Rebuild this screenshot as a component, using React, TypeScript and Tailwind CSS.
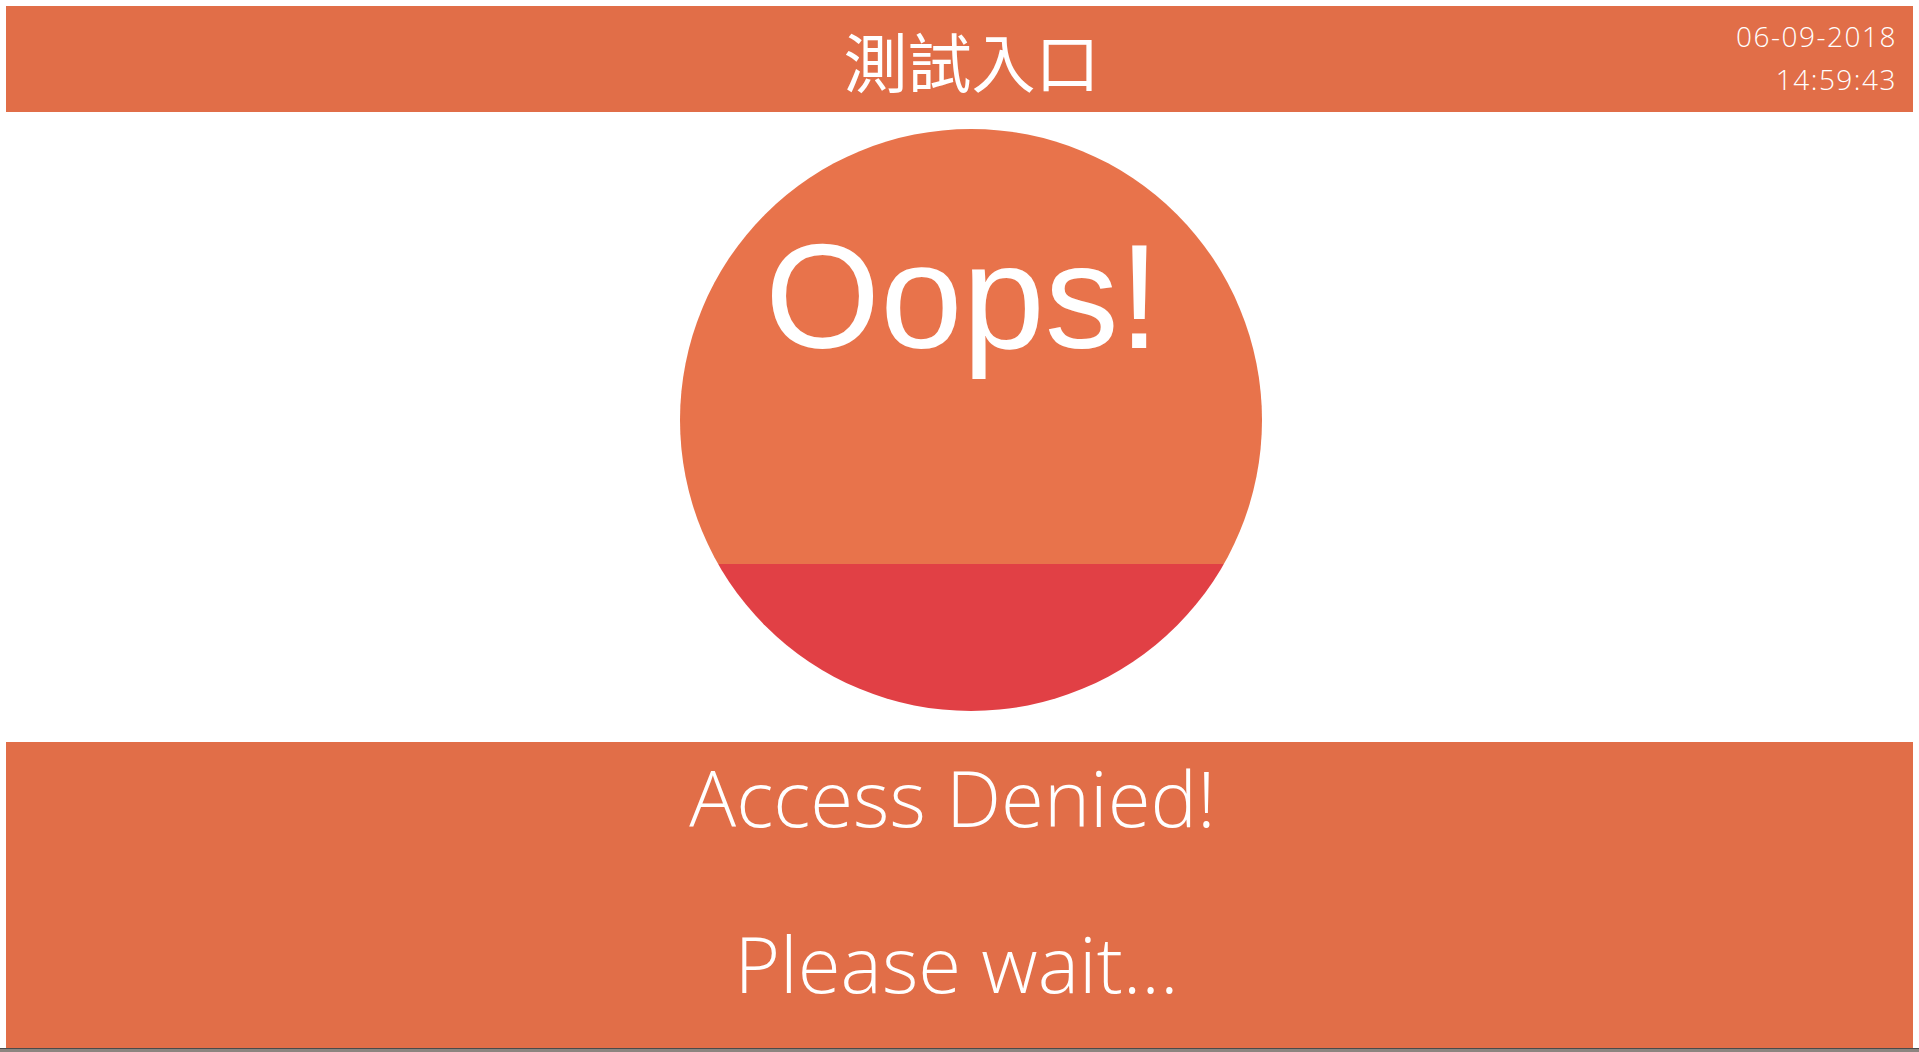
import React from 'react';

function App() {
  return (
    <div className="h-[1052px] w-full bg-white flex flex-col px-[6px] pt-[6px] overflow-hidden">
      {/* Header */}
      <header className="relative h-[106px] shrink-0 bg-[#E16E48] flex items-center justify-center">
        <h1
          className="pl-[24px] text-[64px] leading-none text-white font-normal"
          style={{ fontFamily: '"Noto Sans CJK TC", "Noto Sans CJK SC", sans-serif' }}
        >
          測試入口
        </h1>
        <div
          className="absolute right-[16px] top-[9px] flex flex-col items-end text-[28px] leading-[43px] font-[350] text-white"
          style={{ fontFamily: '"Open Sans", sans-serif' }}
        >
          <span className="tracking-[1.5px]">06-09-2018</span>
          <span className="tracking-[1.5px]">14:59:43</span>
        </div>
      </header>

      {/* Status circle */}
      <main className="h-[630px] shrink-0 flex justify-center pt-[17px]">
        <div className="ml-[22px] w-[582px] h-[582px] rounded-full overflow-hidden flex flex-col">
          <div className="flex-1 bg-[#E8734B] flex justify-center pt-[94px] pr-[16px]">
            <span
              className="text-[148px] leading-none text-white"
              style={{ fontFamily: '"Liberation Sans", Arial, sans-serif' }}
            >
              Oops!
            </span>
          </div>
          <div className="h-[147px] bg-[#E14045]"></div>
        </div>
      </main>

      {/* Message */}
      <section
        className="h-[306px] shrink-0 bg-[#E16E48] flex flex-col items-center pt-[16px] text-white text-[78px] leading-none font-[350]"
        style={{ fontFamily: '"Open Sans", sans-serif' }}
      >
        <p className="pr-[14px]">Access Denied!</p>
        <p className="pr-[6px] mt-[88px]">Please wait...</p>
      </section>

      {/* taskbar edge */}
      <div className="h-[4px] -mx-[6px] shrink-0 bg-[#8c8580] border-t border-[#4a4a4a]"></div>
    </div>
  );
}

export default App;
